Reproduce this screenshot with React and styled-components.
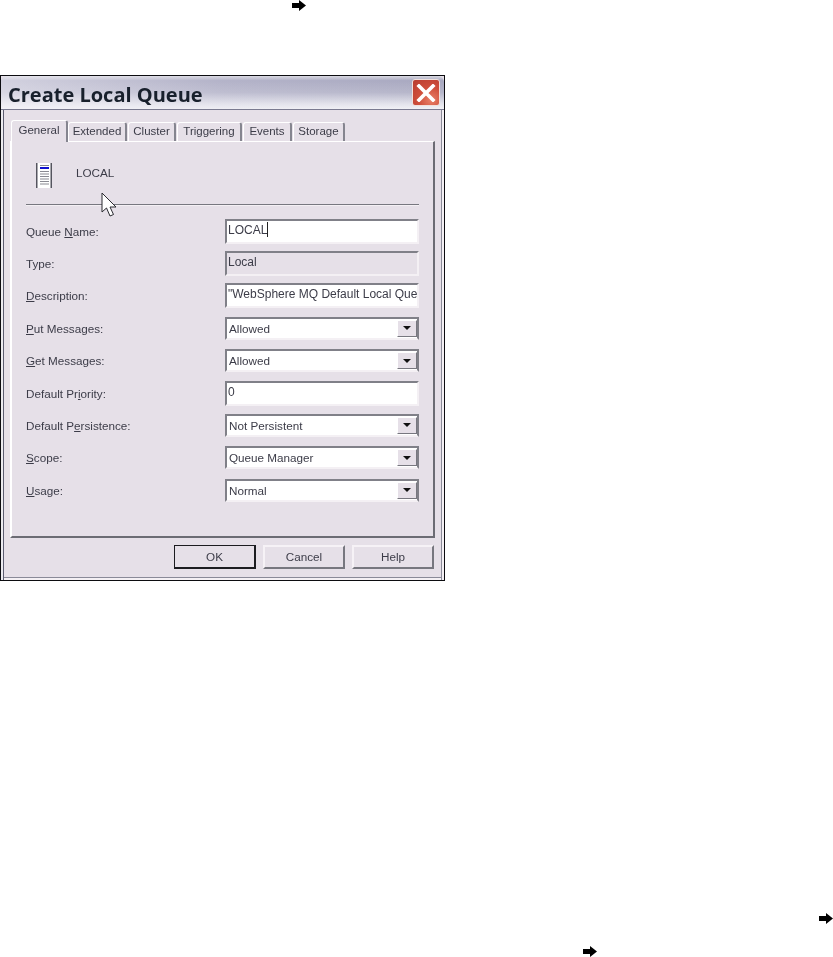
import React from "react";
import styled, { createGlobalStyle } from "styled-components";

const Global = createGlobalStyle`
  html, body { margin: 0; padding: 0; background: #fff; }
`;

const Page = styled.div`
  width: 833px;
  height: 957px;
  overflow: hidden;
  background: #fff;
  display: flex;
  flex-direction: column;
  font-family: "Liberation Sans", Arial, sans-serif;
`;

const ArrowLine = styled.div`
  height: 11px;
  margin-top: ${(p) => p.$top}px;
  padding-left: ${(p) => p.$left}px;
  display: flex;
  filter: blur(0.4px);
`;

const Dialog = styled.div`
  position: relative;
  width: 445px;
  height: 506px;
  margin-top: 64px;
  box-sizing: border-box;
  border: 1px solid #0c0c10;
  background: #e6e0e8;
  display: flex;
  flex-direction: column;
  color: #3c3c48;
  font-size: 11.7px;
`;

const TitleBar = styled.div`
  height: 34px;
  flex: none;
  box-sizing: border-box;
  border-radius: 6px 6px 0 0;
  border-bottom: 1px solid #7a7a90;
  background:
    linear-gradient(90deg, rgba(244, 242, 248, 0.55) 0%, rgba(225, 222, 235, 0.2) 50%, rgba(160, 160, 185, 0) 100%),
    linear-gradient(180deg, #d8d8e0 0%, #a8a8c0 14%, #b6b6ca 50%, #e4e4ec 85%, #f2f2f6 100%);
  display: flex;
  align-items: center;
  justify-content: space-between;
  padding: 0 4px 0 7px;
  filter: blur(0.35px);
`;

const Title = styled.div`
  font-family: "Open Sans", sans-serif;
  font-weight: 700;
  font-size: 20px;
  letter-spacing: 0;
  color: #18202c;
  margin-top: 3px;
`;

const CloseButton = styled.div`
  width: 28px;
  height: 27px;
  box-sizing: border-box;
  border: 1px solid #f0e0dc;
  border-radius: 3px;
  background: radial-gradient(circle at 70% 80%, #e88068 0%, #d0503c 45%, #b83c30 100%);
  display: flex;
  align-items: center;
  justify-content: center;
`;

const Body = styled.div`
  flex: 1;
  display: flex;
  flex-direction: column;
  padding: 9px 9px 0 9px;
  filter: blur(0.4px);
  box-shadow: inset 2px 0 0 #ecebf0, inset 3px 0 0 #5c5c70, inset -2px 0 0 #f4f0f4, inset -3px 0 0 #8a8a98, inset 0 -2px 0 #f4f0f4, inset 0 -3px 0 #8a8a98;
`;

const Tabs = styled.div`
  display: flex;
  height: 22px;
  padding-left: 1px;
  align-items: flex-end;
  position: relative;
  z-index: 1;
`;

const Tab = styled.div`
  box-sizing: border-box;
  width: ${(p) => p.$w}px;
  height: ${(p) => (p.$active ? 22 : 19)}px;
  margin-bottom: ${(p) => (p.$active ? -1 : 0)}px;
  margin-right: ${(p) => (p.$active ? 0 : 1)}px;
  padding-top: ${(p) => (p.$active ? 3 : 2)}px;
  background: #e6e0e8;
  border-top: 1px solid #ffffff;
  border-left: 1px solid #ffffff;
  border-right: 2px solid #85858f;
  border-radius: 3px 3px 0 0;
  white-space: nowrap;
  display: flex;
  justify-content: center;
  font-size: 11.5px;
`;

const Panel = styled.div`
  box-sizing: border-box;
  width: 425px;
  height: 397px;
  border-top: 1px solid #ffffff;
  border-left: 2px solid #ffffff;
  border-right: 2px solid #6c6c74;
  border-bottom: 2px solid #6c6c74;
  padding: 22px 13px 0 14px;
`;

const Header = styled.div`
  display: flex;
  align-items: center;
  height: 24px;
  padding-left: 10px;
  gap: 24px;
  margin-bottom: 16px;
`;

const QueueIcon = styled.svg`
  width: 16px;
  height: 25px;
  flex: none;
  margin-top: -1px;
`;

const HeaderName = styled.div`
  margin-top: -8px;
`;

const Separator = styled.div`
  height: 1px;
  width: 393px;
  background: #77777f;
  box-shadow: 0 1px 0 #f4f0f4;
  margin-bottom: 14px;
`;

const Form = styled.div`
  display: grid;
  grid-template-columns: 199px 194px;
  grid-auto-rows: 24.375px;
  row-gap: 8px;
  align-items: center;
`;

const Label = styled.label``;

const Key = styled.span`
  text-decoration: underline;
  text-underline-offset: 1px;
`;

const Input = styled.div`
  box-sizing: border-box;
  height: 25px;
  padding: 0 0 3px 1px;
  font-size: 12px;
  background: ${(p) => (p.$disabled ? "#e6e0e8" : "#ffffff")};
  border-top: 2px solid #808088;
  border-left: 2px solid #808088;
  border-right: 2px solid #f4f0f4;
  border-bottom: 2px solid #f4f0f4;
  display: flex;
  align-items: center;
  white-space: nowrap;
  overflow: hidden;
`;

const Caret = styled.span`
  display: inline-block;
  width: 1px;
  height: 15px;
  background: #222;
`;

const Select = styled.div`
  box-sizing: border-box;
  height: 23px;
  padding-left: 2px;
  background: #ffffff;
  border-top: 2px solid #808088;
  border-left: 2px solid #808088;
  border-right: 2px solid #808088;
  border-bottom: 2px solid #f4f0f4;
  display: flex;
  align-items: center;
  justify-content: space-between;
`;

const SelectArrow = styled.div`
  width: 20px;
  height: 17px;
  box-sizing: border-box;
  background: #e6e0e8;
  border-top: 1px solid #fff;
  border-left: 1px solid #fff;
  border-right: 1px solid #77777f;
  border-bottom: 1px solid #77777f;
  display: flex;
  align-items: center;
  justify-content: center;
  &::after {
    content: "";
    border-left: 4px solid transparent;
    border-right: 4px solid transparent;
    border-top: 4px solid #111;
  }
`;

const Footer = styled.div`
  display: flex;
  justify-content: flex-end;
  gap: 7px;
  padding: 7px 1px 0 0;
`;

const Button = styled.div`
  box-sizing: border-box;
  width: 82px;
  height: 24px;
  padding-bottom: 1px;
  display: flex;
  align-items: center;
  justify-content: center;
  background: #e6e0e8;
  border-top: ${(p) => (p.$primary ? "1px solid #1c1c20" : "2px solid #f6f2f6")};
  border-left: ${(p) => (p.$primary ? "1px solid #1c1c20" : "2px solid #f6f2f6")};
  border-right: 2px solid ${(p) => (p.$primary ? "#1c1c20" : "#77777f")};
  border-bottom: 2px solid ${(p) => (p.$primary ? "#1c1c20" : "#77777f")};
`;

const Pointer = styled.svg`
  position: absolute;
  left: 100px;
  top: 116px;
  width: 16px;
  height: 26px;
`;

const Arrow = () => (
  <svg width="14" height="11" viewBox="0 0 14 11">
    <path d="M0 3h7V0l7 5.5L7 11V8H0z" fill="#000" />
  </svg>
);

const rows = [
  { label: <>Queue <Key>N</Key>ame:</>, kind: "input", value: <>LOCAL<Caret /></> },
  { label: "Type:", kind: "input", value: "Local", disabled: true },
  { label: <><Key>D</Key>escription:</>, kind: "input", value: "\"WebSphere MQ Default Local Que" },
  { label: <><Key>P</Key>ut Messages:</>, kind: "select", value: "Allowed" },
  { label: <><Key>G</Key>et Messages:</>, kind: "select", value: "Allowed" },
  { label: <>Default Pr<Key>i</Key>ority:</>, kind: "input", value: "0" },
  { label: <>Default P<Key>e</Key>rsistence:</>, kind: "select", value: "Not Persistent" },
  { label: <><Key>S</Key>cope:</>, kind: "select", value: "Queue Manager" },
  { label: <><Key>U</Key>sage:</>, kind: "select", value: "Normal" },
];

const tabs = [
  ["General", 57, true],
  ["Extended", 59],
  ["Cluster", 48],
  ["Triggering", 65],
  ["Events", 49],
  ["Storage", 52],
];

export default function App() {
  return (
    <Page>
      <Global />
      <ArrowLine $top={0} $left={292}><Arrow /></ArrowLine>
      <Dialog>
        <TitleBar>
          <Title>Create Local Queue</Title>
          <CloseButton>
            <svg width="20" height="18" viewBox="0 0 20 18">
              <path d="M3 2l14 14M17 2L3 16" stroke="#fff" strokeWidth="3.6" strokeLinecap="square" />
            </svg>
          </CloseButton>
        </TitleBar>
        <Body>
          <Tabs>
            {tabs.map(([t, w, a]) => (
              <Tab key={t} $w={w} $active={a}>{t}</Tab>
            ))}
          </Tabs>
          <Panel>
            <Header>
              <QueueIcon viewBox="0 0 16 25">
                <rect x="0" y="0" width="16" height="25" fill="#fff" />
                <rect x="0" y="0" width="1.5" height="25" fill="#55555f" />
                <rect x="14.5" y="0" width="1.5" height="25" fill="#55555f" />
                <rect x="4" y="4" width="9" height="2" fill="#1010d0" />
                {[2, 8, 10.5, 13, 15.5, 18, 20.5].map((y) => (
                  <rect key={y} x="4" y={y} width="9" height="1" fill="#8a8a92" />
                ))}
              </QueueIcon>
              <HeaderName>LOCAL</HeaderName>
            </Header>
            <Separator />
            <Form>
              {rows.map((r, i) => (
                <React.Fragment key={i}>
                  <Label>{r.label}</Label>
                  {r.kind === "input" ? (
                    <Input $disabled={r.disabled}>{r.value}</Input>
                  ) : (
                    <Select>{r.value}<SelectArrow /></Select>
                  )}
                </React.Fragment>
              ))}
            </Form>
          </Panel>
          <Footer>
            <Button $primary>OK</Button>
            <Button>Cancel</Button>
            <Button>Help</Button>
          </Footer>
        </Body>
        <Pointer viewBox="0 0 16 26">
          <path d="M1 1v19l4.5-4 3.5 8 3.5-1.5-3.5-7.5h6z" fill="#fff" stroke="#2a2a30" strokeWidth="1" />
        </Pointer>
      </Dialog>
      <ArrowLine $top={332} $left={819}><Arrow /></ArrowLine>
      <ArrowLine $top={22} $left={583}><Arrow /></ArrowLine>
    </Page>
  );
}
